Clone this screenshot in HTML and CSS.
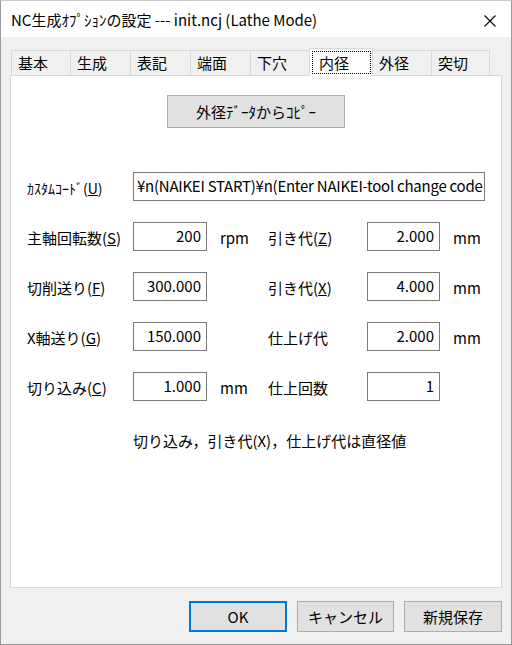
FILE: index.html
```html
<!DOCTYPE html>
<html lang="ja">
<head>
<meta charset="utf-8">
<title>NC生成ｵﾌﾟｼｮﾝの設定</title>
<link rel="stylesheet" href="styles.css">
</head>
<body>
<div class="window">
  <div class="titlebar">
    <span class="title">NC生成ｵﾌﾟｼｮﾝの設定 --- init.ncj (Lathe Mode)</span>
    <svg class="close" width="12" height="12" viewBox="0 0 12 12"><path d="M0.5 0.5 L11.5 11.5 M11.5 0.5 L0.5 11.5" stroke="#000" stroke-width="1.1" fill="none"/></svg>
  </div>
  <div class="body">
    <div class="tabs">
      <div class="tab t1">基本</div>
      <div class="tab">生成</div>
      <div class="tab">表記</div>
      <div class="tab">端面</div>
      <div class="tab">下穴</div>
      <div class="tab sel"><span class="focus">内径</span></div>
      <div class="tab t7">外径</div>
      <div class="tab t8">突切</div>
    </div>
    <div class="panel">
      <div class="copy-row"><div class="btn copy">外径ﾃﾞｰﾀからｺﾋﾟｰ</div></div>
      <div class="custom-row">
        <span class="label custom-label">ｶｽﾀﾑｺｰﾄﾞ(<u>U</u>)</span>
        <div class="input wide">¥n(NAIKEI START)¥n(Enter NAIKEI-tool change code</div>
      </div>
      <div class="grid">
        <span class="label">主軸回転数(<u>S</u>)</span>
        <div class="input num">200</div>
        <span class="unit">rpm</span>
        <span class="label">引き代(<u>Z</u>)</span>
        <div class="input num">2.000</div>
        <span class="unit">mm</span>

        <span class="label">切削送り(<u>F</u>)</span>
        <div class="input num">300.000</div>
        <span class="unit"></span>
        <span class="label">引き代(<u>X</u>)</span>
        <div class="input num">4.000</div>
        <span class="unit">mm</span>

        <span class="label">X軸送り(<u>G</u>)</span>
        <div class="input num">150.000</div>
        <span class="unit"></span>
        <span class="label">仕上げ代</span>
        <div class="input num">2.000</div>
        <span class="unit">mm</span>

        <span class="label">切り込み(<u>C</u>)</span>
        <div class="input num">1.000</div>
        <span class="unit">mm</span>
        <span class="label">仕上回数</span>
        <div class="input num">1</div>
        <span class="unit"></span>
      </div>
      <div class="note">切り込み，引き代(X)，仕上げ代は直径値</div>
    </div>
    <div class="buttons">
      <div class="btn ok">OK</div>
      <div class="btn">キャンセル</div>
      <div class="btn">新規保存</div>
    </div>
  </div>
</div>
</body>
</html>
```
FILE: styles.css
```css
* { box-sizing: border-box; }
html, body { margin: 0; padding: 0; }
body {
  width: 512px;
  height: 645px;
  overflow: hidden;
  font-family: "Noto Sans CJK JP", "Noto Sans", sans-serif;
  font-size: 15px;
  color: #000;
  background: #fff;
}
.window {
  width: 512px;
  height: 645px;
  border: 1px solid #9a9a9a;
  border-top-color: #c8c8c8;
  background: #f0f0f0;
  display: flex;
  flex-direction: column;
}
.titlebar {
  height: 36px;
  background: #fff;
  display: flex;
  align-items: center;
  justify-content: space-between;
  padding: 2px 15px 0 10px;
  flex: none;
}
.title { font-size: 15px; line-height: 20px; }
.close { display: block; margin-top: 1px; }
.body {
  flex: 1;
  padding: 11px 9px 0 9px;
  display: flex;
  flex-direction: column;
}
.tabs {
  display: flex;
  align-items: flex-end;
  height: 27px;
  padding-left: 1px;
  flex: none;
}
.tab {
  position: relative;
  height: 25px;
  width: 61px;
  margin-left: -1px;
  border: 1px solid #d9d9d9;
  border-bottom: none;
  background: #f0f0f0;
  padding-left: 6px;
  line-height: 24px;
  font-size: 15px;
}
.tab.t1 { width: 60px; margin-left: 0; }
.tab.sel {
  width: 64px;
  height: 28px;
  margin-left: -2px;
  margin-bottom: -1px;
  background: #fff;
  z-index: 2;
  padding: 2px 0 0 2px;
  line-height: 22px;
}
.focus {
  display: block;
  width: 59px;
  height: 23px;
  border: 1px dotted #000;
  padding-left: 6px;
  line-height: 21px;
}
.tab.t7 { width: 60px; margin-left: -1px; }
.tab.t8 { width: 59px; }
.panel {
  height: 513px;
  border: 1px solid #d9d9d9;
  background: #fff;
  padding: 19px 0 0 16px;
  flex: none;
}
.copy-row {
  display: flex;
  justify-content: center;
  padding-right: 16px;
}
.btn {
  background: #e1e1e1;
  border: 1px solid #adadad;
  width: 97px;
  height: 31px;
  display: flex;
  align-items: center;
  justify-content: center;
  font-size: 15px;
}
.btn.copy { width: 178px; height: 33px; }
.custom-row {
  display: flex;
  align-items: center;
  margin-top: 44px;
}
.label { line-height: 20px; padding-top: 3px; }
.custom-label { width: 106px; font-size: 14px; }
.input {
  border: 1px solid #7a7a7a;
  background: #fff;
  height: 29px;
  line-height: 26px;
  white-space: nowrap;
  overflow: hidden;
}
.input.wide { width: 352px; padding-left: 3px; letter-spacing: -0.25px; }
.input.num { text-align: right; padding-right: 5px; }
.grid {
  display: grid;
  grid-template-columns: 106px 74px 61px 99px 73px 1fr;
  grid-auto-rows: 29px;
  row-gap: 21px;
  align-items: center;
  margin-top: 21px;
}
.unit { padding-left: 13px; line-height: 20px; padding-top: 3px; }
.note {
  margin-top: 29px;
  padding-left: 106px;
  line-height: 22px;
}
.buttons {
  display: flex;
  justify-content: flex-end;
  gap: 10px;
  margin-top: 13px;
  padding-right: 0;
}
.btn.ok {
  width: 98px;
  border: 2px solid #0078d7;
}
.buttons .btn:last-child { width: 98px; }
```
